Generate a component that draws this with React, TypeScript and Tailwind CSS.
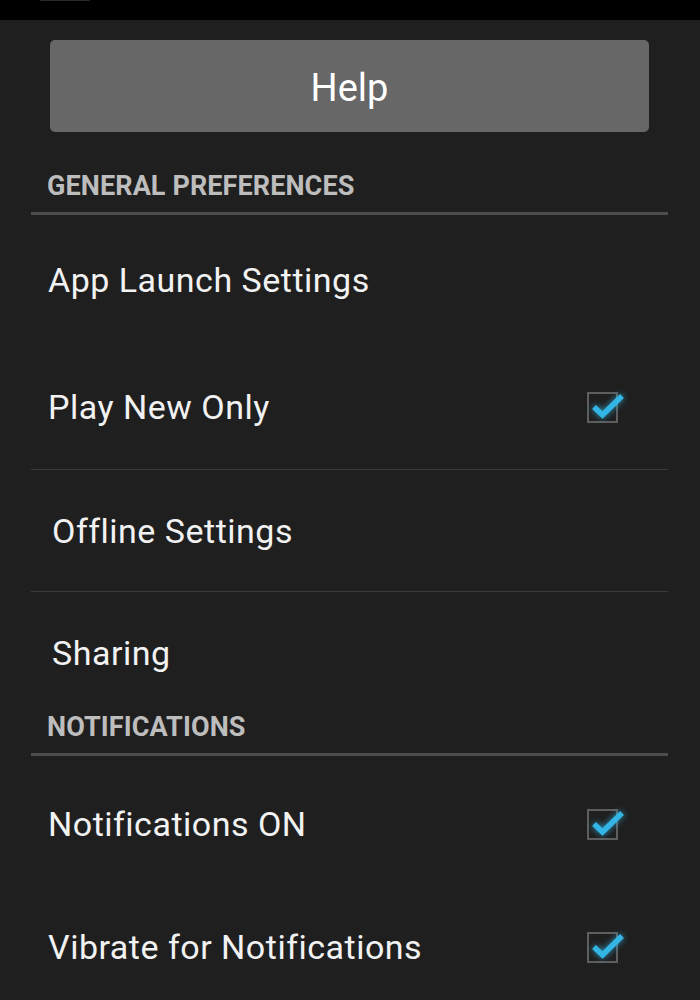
import React from "react";

function Check() {
  return (
    <div className="relative w-[31px] h-[31px] border-2 border-[#5e5e5e]">
      <svg
        className="absolute left-[-2px] top-[-2px] overflow-visible"
        width="40"
        height="34"
        viewBox="0 0 40 34"
        style={{ filter: "drop-shadow(0 0 3px rgba(51,181,229,0.8))" }}
      >
        <path
          d="M7 15 L15.5 23 L35 4"
          fill="none"
          stroke="#33b5e5"
          strokeWidth="5.5"
          strokeLinecap="butt"
          strokeLinejoin="miter"
        />
      </svg>
    </div>
  );
}

function Header({ title, pt }: { title: string; pt: string }) {
  return (
    <div className={pt}>
      <div className="pl-[16px] text-[27px] leading-[26px] font-bold text-[#bdbdbd] tracking-[0.1px]">
        {title}
      </div>
      <div className="mt-[13px] h-[3px] bg-[#4c4c4c]" />
    </div>
  );
}

function Item({
  label,
  h,
  pl = "pl-[17px]",
  checked,
}: {
  label: string;
  h: string;
  pl?: string;
  checked?: boolean;
}) {
  return (
    <div className={`flex items-center justify-between pr-[50px] ${h} ${pl}`}>
      <span className="text-[34px] leading-[32px] tracking-[0.5px] text-[#f2f2f2]">{label}</span>
      {checked && <Check />}
    </div>
  );
}

export default function App() {
  return (
    <div
      className="w-[700px] h-[1000px] overflow-hidden bg-[#1f1f1f]"
      style={{ fontFamily: "Roboto, 'Noto Sans', sans-serif" }}
    >
      <div className="h-[20px] bg-black pl-[40px]">
        <div className="w-[50px] h-[1px] bg-[#2a2a2a] rounded-b" />
      </div>
      <div className="pt-[20px] pl-[50px] pr-[51px]">
        <div className="h-[92px] pt-[4px] rounded-[5px] bg-[#676767] flex items-center justify-center text-[38px] leading-[38px] text-white">
          Help
        </div>
      </div>
      <div className="px-[31px] pr-[32px]">
        <Header title="GENERAL PREFERENCES" pt="pt-[41px]" />
        <Item label="App Launch Settings" h="h-[130px]" />
        <Item label="Play New Only" h="h-[124px]" checked />
        <div className="h-[1px] bg-[#3a3a3a]" />
        <Item label="Offline Settings" h="h-[121px]" pl="pl-[21px]" />
        <div className="h-[1px] bg-[#3a3a3a]" />
        <Item label="Sharing" h="h-[122px]" pl="pl-[21px]" />
        <Header title="NOTIFICATIONS" pt="pt-[0px]" />
        <Item label="Notifications ON" h="h-[136px]" checked />
        <Item label="Vibrate for Notifications" h="h-[110px]" checked />
      </div>
    </div>
  );
}
